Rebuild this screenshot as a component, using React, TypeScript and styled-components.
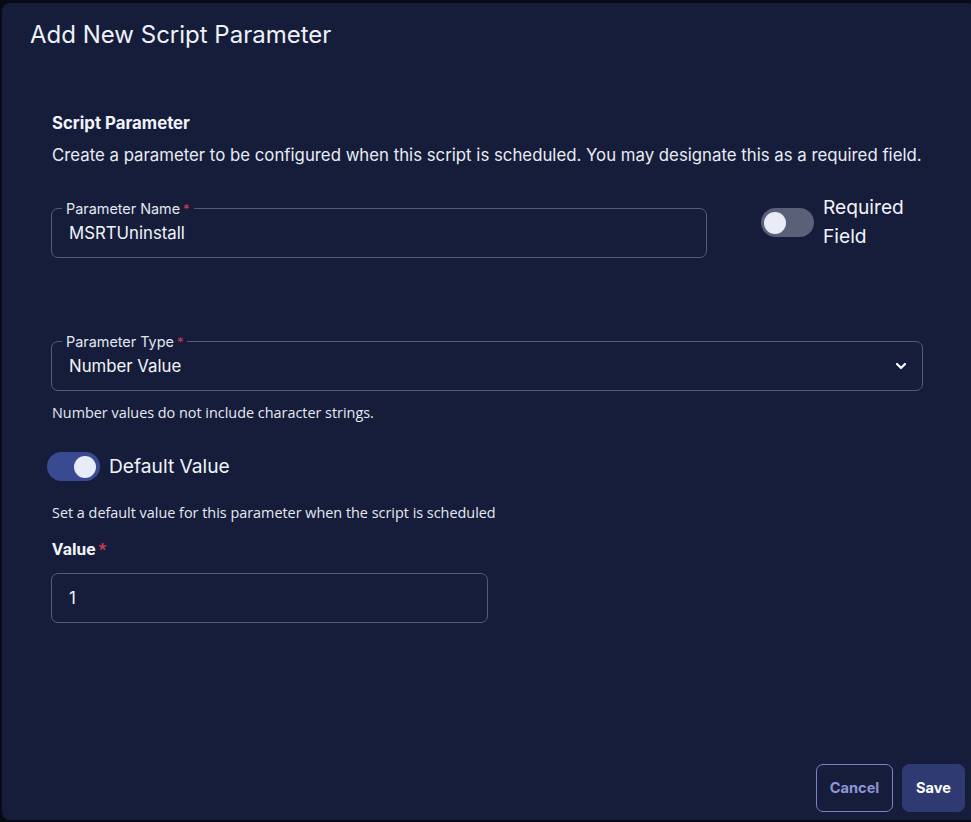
import React, { useState } from "react";
import styled, { createGlobalStyle } from "styled-components";

const GlobalStyle = createGlobalStyle`
  html, body {
    margin: 0;
    padding: 0;
    background: #080a14;
    font-family: Inter, "Noto Sans", sans-serif;
  }
  * {
    box-sizing: border-box;
  }
`;

const Page = styled.div`
  width: 971px;
  height: 822px;
  padding: 3px 0 0 2px;
  overflow: hidden;
`;

const Dialog = styled.section`
  width: 975px;
  height: 817px;
  background: #161d3b;
  border-radius: 8px;
  display: flex;
  flex-direction: column;
  padding: 18px 0 0 28px;
`;

const Title = styled.h2`
  margin: 0;
  font-size: 24px;
  font-weight: 400;
  color: #eef1f8;
  line-height: 28px;
`;

const Body = styled.div`
  flex: 1;
  padding: 63px 0 0 21px;
  display: flex;
  flex-direction: column;
`;

const SectionHeading = styled.h3`
  margin: 0 0 0 1px;
  font-size: 16.8px;
  font-weight: 700;
  color: #f1f3f9;
  line-height: 22px;
`;

const Description = styled.p`
  margin: 10px 0 0 1px;
  font-size: 16.8px;
  color: #e9ecf4;
  line-height: 22px;
`;

const NameRow = styled.div`
  display: flex;
  align-items: flex-start;
  gap: 54px;
  margin-top: 42px;
`;

const Field = styled.div<{ $width: number }>`
  position: relative;
  width: ${({ $width }) => $width}px;
  height: 50px;
  border: 1px solid #525a7e;
  border-radius: 7px;
  display: flex;
  align-items: center;
  padding: 0 13px 0 17px;
  color: #f3f5fa;
  font-size: 16.8px;
`;

const Legend = styled.span`
  position: absolute;
  top: -9px;
  left: 10px;
  padding: 0 4px;
  background: #161d3b;
  font-size: 14.4px;
  line-height: 18px;
  color: #e2e6f0;
`;

const Star = styled.span`
  color: #d23a4e;
  margin-left: 3px;
  font-size: 13px;
`;

const FieldValue = styled.span`
  flex: 1;
`;

const ToggleWrap = styled.label`
  display: flex;
  align-items: flex-start;
  gap: 9px;
  cursor: pointer;
`;

const Track = styled.span<{ $on: boolean }>`
  position: relative;
  display: inline-block;
  width: 53px;
  height: 29px;
  border-radius: 15px;
  background: ${({ $on }) => ($on ? "#3a4a92" : "#5b6079")};
  flex-shrink: 0;
`;

const Knob = styled.span<{ $on: boolean }>`
  position: absolute;
  top: 4px;
  left: ${({ $on }) => ($on ? "27px" : "3px")};
  width: 22px;
  height: 22px;
  border-radius: 50%;
  background: #e9ecf7;
`;

const ToggleText = styled.span<{ $narrow?: boolean }>`
  font-size: 19.2px;
  line-height: 29px;
  color: #f1f3f9;
  width: ${({ $narrow }) => ($narrow ? "92px" : "auto")};
  margin-top: ${({ $narrow }) => ($narrow ? "-15px" : "0")};
`;

const TypeBlock = styled.div`
  margin-top: 83px;
`;

const Helper = styled.p<{ $top: number }>`
  margin: ${({ $top }) => $top}px 0 0 1px;
  font-family: "Open Sans", "Noto Sans", sans-serif;
  font-size: 14.4px;
  line-height: 18px;
  color: #e6e9f2;
`;

const DefaultRow = styled.div`
  margin: 30px 0 0 -4px;
`;

const ValueLabel = styled.div`
  margin: 16px 0 0 1px;
  font-family: Roboto, "Noto Sans", sans-serif;
  font-weight: 700;
  font-size: 17.2px;
  color: #f1f3f9;
  line-height: 22px;
`;

const ValueStar = styled.span`
  color: #d23a4e;
  margin-left: 3px;
`;

const ValueField = styled(Field)`
  margin-top: 13px;
`;

const Footer = styled.div`
  display: flex;
  justify-content: flex-end;
  gap: 9px;
  padding: 0 6px 8px 0;
  margin-right: 6px;
`;

const Button = styled.button<{ $primary?: boolean }>`
  height: 48px;
  padding: 0;
  border-radius: 7px;
  font-family: Inter, "Noto Sans", sans-serif;
  font-weight: 700;
  font-size: 14.6px;
  cursor: pointer;
  border: 1px solid ${({ $primary }) => ($primary ? "#2f3a72" : "#7a83c8")};
  background: ${({ $primary }) => ($primary ? "#2f3a72" : "transparent")};
  color: ${({ $primary }) => ($primary ? "#ffffff" : "#8d95d6")};
  width: ${({ $primary }) => ($primary ? "63px" : "77px")};
`;

const Chevron = () => (
  <svg width="16" height="16" viewBox="0 0 24 24" fill="none" stroke="#ffffff" strokeWidth="3.2" strokeLinecap="round" strokeLinejoin="round">
    <polyline points="6 9 12 15 18 9" />
  </svg>
);

function Toggle({ on, label, narrow, onClick }: { on: boolean; label: string; narrow?: boolean; onClick: () => void }) {
  return (
    <ToggleWrap onClick={onClick}>
      <Track $on={on}>
        <Knob $on={on} />
      </Track>
      <ToggleText $narrow={narrow}>{label}</ToggleText>
    </ToggleWrap>
  );
}

export default function App() {
  const [required, setRequired] = useState(false);
  const [hasDefault, setHasDefault] = useState(true);

  return (
    <Page>
      <GlobalStyle />
      <Dialog>
        <Title>Add New Script Parameter</Title>
        <Body>
          <SectionHeading>Script Parameter</SectionHeading>
          <Description>
            Create a parameter to be configured when this script is scheduled. You may designate this as a required field.
          </Description>

          <NameRow>
            <Field $width={656}>
              <Legend>
                Parameter Name<Star>*</Star>
              </Legend>
              <FieldValue>MSRTUninstall</FieldValue>
            </Field>
            <Toggle on={required} label="Required Field" narrow onClick={() => setRequired(!required)} />
          </NameRow>

          <TypeBlock>
            <Field $width={872}>
              <Legend>
                Parameter Type<Star>*</Star>
              </Legend>
              <FieldValue>Number Value</FieldValue>
              <Chevron />
            </Field>
            <Helper $top={13}>Number values do not include character strings.</Helper>
          </TypeBlock>

          <DefaultRow>
            <Toggle on={hasDefault} label="Default Value" onClick={() => setHasDefault(!hasDefault)} />
          </DefaultRow>

          <Helper $top={23}>Set a default value for this parameter when the script is scheduled</Helper>

          <ValueLabel>
            Value<ValueStar>*</ValueStar>
          </ValueLabel>
          <ValueField $width={437}>
            <FieldValue>1</FieldValue>
          </ValueField>
        </Body>
        <Footer>
          <Button>Cancel</Button>
          <Button $primary>Save</Button>
        </Footer>
      </Dialog>
    </Page>
  );
}
